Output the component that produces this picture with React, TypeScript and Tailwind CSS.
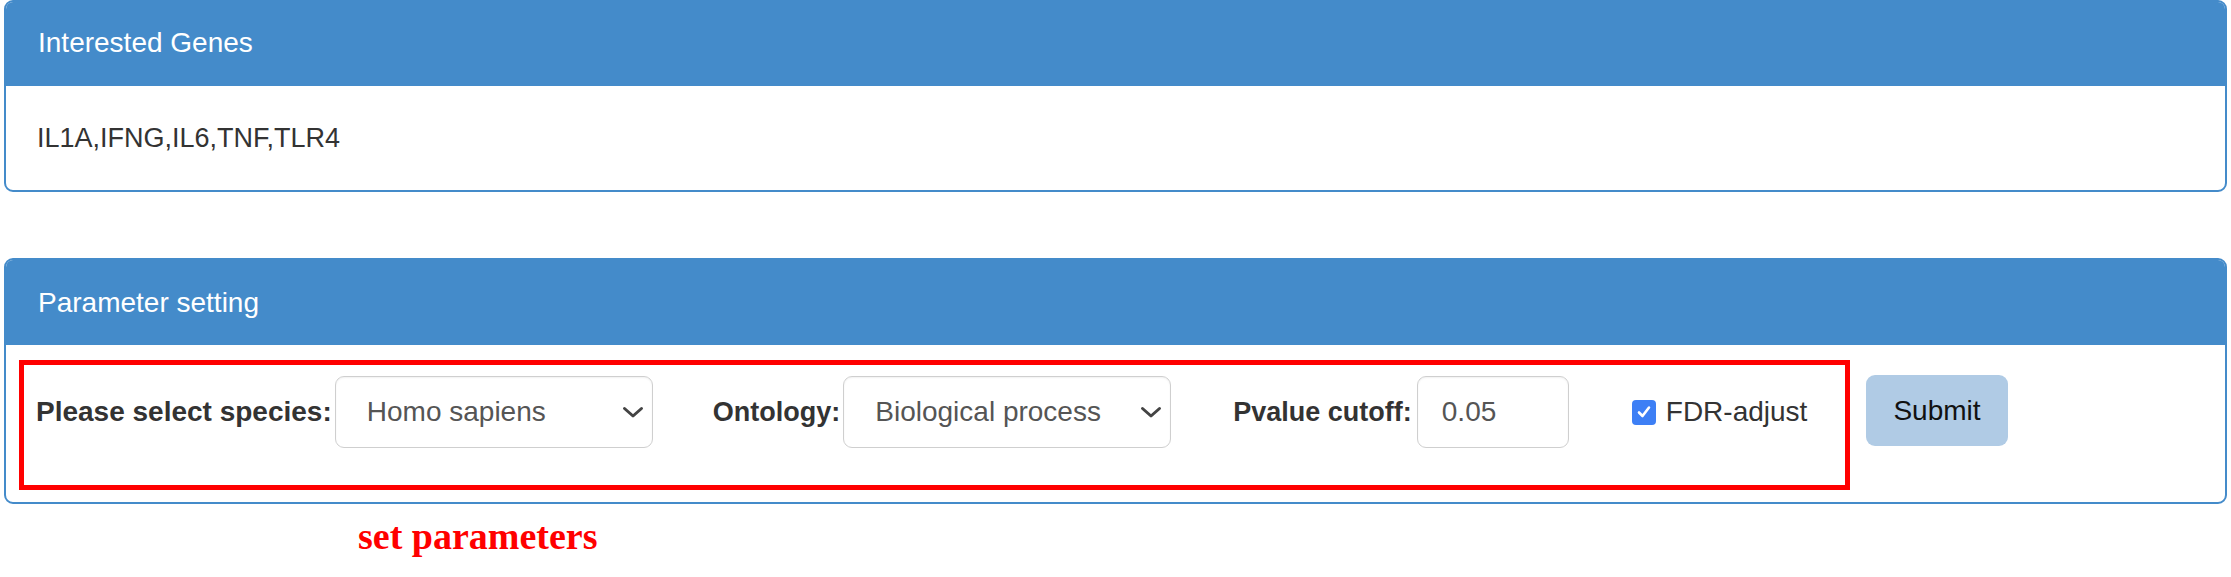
import React from 'react';

function Chevron() {
  return (
    <svg width="22" height="13" viewBox="0 0 22 13" className="shrink-0">
      <path d="M2.5 2.5 L11 10 L19.5 2.5" fill="none" stroke="#444" strokeWidth="3" strokeLinecap="round" strokeLinejoin="round" />
    </svg>
  );
}

function FakeSelect({ value, width }: { value: string; width: string }) {
  return (
    <div
      className={`${width} h-[72px] flex items-center justify-between pl-[31px] pr-[8px] border border-[#cfcfcf] rounded-[9px] bg-white shadow-[inset_0_1px_2px_rgba(0,0,0,0.06)] text-[28px] text-[#555]`}
    >
      <span>{value}</span>
      <Chevron />
    </div>
  );
}

export default function App() {
  return (
    <div className="w-[2231px] h-[577px] overflow-hidden bg-white font-['Liberation_Sans',Arial,sans-serif]">
      {/* Interested Genes */}
      <div className="mx-[4px] border-2 border-[#448bca] rounded-[9px] overflow-hidden">
        <div className="h-[84px] bg-[#448bca] flex items-center pl-[32px] pb-[2px] text-[28px] text-white">
          Interested Genes
        </div>
        <div className="h-[104px] flex items-center pl-[31px] text-[27px] text-[#333]">
          IL1A,IFNG,IL6,TNF,TLR4
        </div>
      </div>

      {/* Parameter setting */}
      <div className="mt-[66px] mx-[4px] border-2 border-[#448bca] rounded-[9px] overflow-hidden">
        <div className="h-[85px] bg-[#448bca] flex items-center pl-[32px] text-[28px] text-white">
          Parameter setting
        </div>
        <div className="h-[157px] flex items-start pt-[15px] pl-[13px]">
          <div className="w-[1831px] h-[130px] border-[5px] border-[#ff0000] pt-[11px] pl-[12px]">
            <div className="flex items-center text-[27px] text-[#333]">
              <span className="font-bold text-[28px] mr-[3px]">Please select species:</span>
              <FakeSelect value="Homo sapiens" width="w-[318px]" />
              <span className="font-bold ml-[60px] mr-[3px]">Ontology:</span>
              <FakeSelect value="Biological process" width="w-[328px]" />
              <span className="font-bold ml-[62px] mr-[5px]">Pvalue cutoff:</span>
              <div className="w-[152px] h-[72px] flex items-center pl-[24px] border border-[#cfcfcf] rounded-[9px] shadow-[inset_0_1px_2px_rgba(0,0,0,0.06)] text-[28px] text-[#555]">
                0.05
              </div>
              <div className="ml-[63px] flex items-center">
                <div className="w-[24px] h-[25px] rounded-[4px] bg-[#3d7ff5] flex items-center justify-center">
                  <svg width="16" height="16" viewBox="0 0 16 16">
                    <path d="M3 8.5 L6.5 12 L13 3.5" fill="none" stroke="white" strokeWidth="2.6" strokeLinecap="round" strokeLinejoin="round" />
                  </svg>
                </div>
                <span className="ml-[10px] text-[28px] text-[#333]">FDR-adjust</span>
              </div>
            </div>
          </div>
          <button className="ml-[16px] mt-[15px] w-[142px] h-[71px] rounded-[9px] bg-[#b0cbe5] text-[28px] text-[#111]">
            Submit
          </button>
        </div>
      </div>

      <div className="mt-[13px] pl-[358px] font-['Liberation_Serif',serif] font-bold text-[38px] leading-[38px] text-[#ff0000]">
        set parameters
      </div>
    </div>
  );
}
